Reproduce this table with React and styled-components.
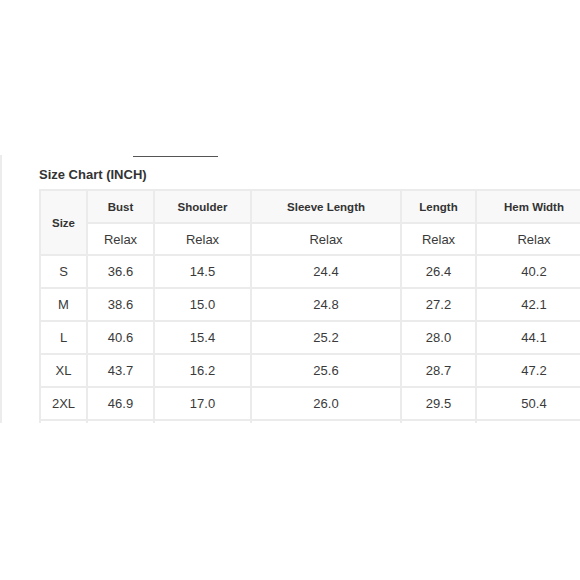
import React from "react";
import styled, { createGlobalStyle } from "styled-components";

const rows = [
  ["S", "36.6", "14.5", "24.4", "26.4", "40.2"],
  ["M", "38.6", "15.0", "24.8", "27.2", "42.1"],
  ["L", "40.6", "15.4", "25.2", "28.0", "44.1"],
  ["XL", "43.7", "16.2", "25.6", "28.7", "47.2"],
  ["2XL", "46.9", "17.0", "26.0", "29.5", "50.4"],
  ["", "", "", "", "", ""],
];

const heads = ["Bust", "Shoulder", "Sleeve Length", "Length", "Hem Width"];
const widths = [47, 67, 97, 150, 75, 116];

const GlobalStyle = createGlobalStyle`
  body {
    margin: 0;
    background: #fff;
    font-family: "Liberation Sans", Arial, sans-serif;
  }
`;

const Page = styled.div`
  width: 580px;
  height: 580px;
  overflow: hidden;
  padding-top: 155px;
  box-sizing: border-box;
`;

const Panel = styled.div`
  border-left: 2px solid #ececec;
  height: 268px;
  overflow: hidden;
  padding-left: 37px;
`;

const TabLine = styled.div`
  width: 85px;
  height: 1px;
  margin: 1px 0 0 94px;
  background: #555;
`;

const Title = styled.h3`
  margin: 10px 0 0;
  font-size: 13px;
  font-weight: bold;
  color: #333;
  line-height: 16px;
`;

const Table = styled.table`
  margin-top: 6px;
  border-collapse: collapse;
  table-layout: fixed;
  width: ${widths.reduce((a, b) => a + b, 0)}px;
`;

const Cell = styled.td`
  border: 2px solid #ebebeb;
  height: ${(p) => (p.$short ? "30px" : "31px")};
  padding: 0;
  text-align: center;
  font-size: ${(p) => (p.$head ? "11.5px" : "13px")};
  font-weight: ${(p) => (p.$head ? "bold" : "normal")};
  color: ${(p) => (p.$head ? "#333" : "#3a3a3a")};
  background: ${(p) => (p.$shade ? "#f8f8f8" : "#fff")};
`;

export default function App() {
  return (
    <>
      <GlobalStyle />
      <Page>
        <Panel>
          <TabLine />
          <Title>Size Chart (INCH)</Title>
          <Table>
            <colgroup>
              {widths.map((w, i) => (
                <col key={i} style={{ width: w }} />
              ))}
            </colgroup>
            <tbody>
              <tr>
                <Cell as="th" rowSpan={2} $head $shade>
                  Size
                </Cell>
                {heads.map((h) => (
                  <Cell as="th" key={h} $head $shade>
                    {h}
                  </Cell>
                ))}
              </tr>
              <tr>
                {heads.map((h) => (
                  <Cell key={h} $short>
                    Relax
                  </Cell>
                ))}
              </tr>
              {rows.map((r, i) => (
                <tr key={i}>
                  {r.map((v, j) => (
                    <Cell key={j}>{v}</Cell>
                  ))}
                </tr>
              ))}
            </tbody>
          </Table>
        </Panel>
      </Page>
    </>
  );
}
